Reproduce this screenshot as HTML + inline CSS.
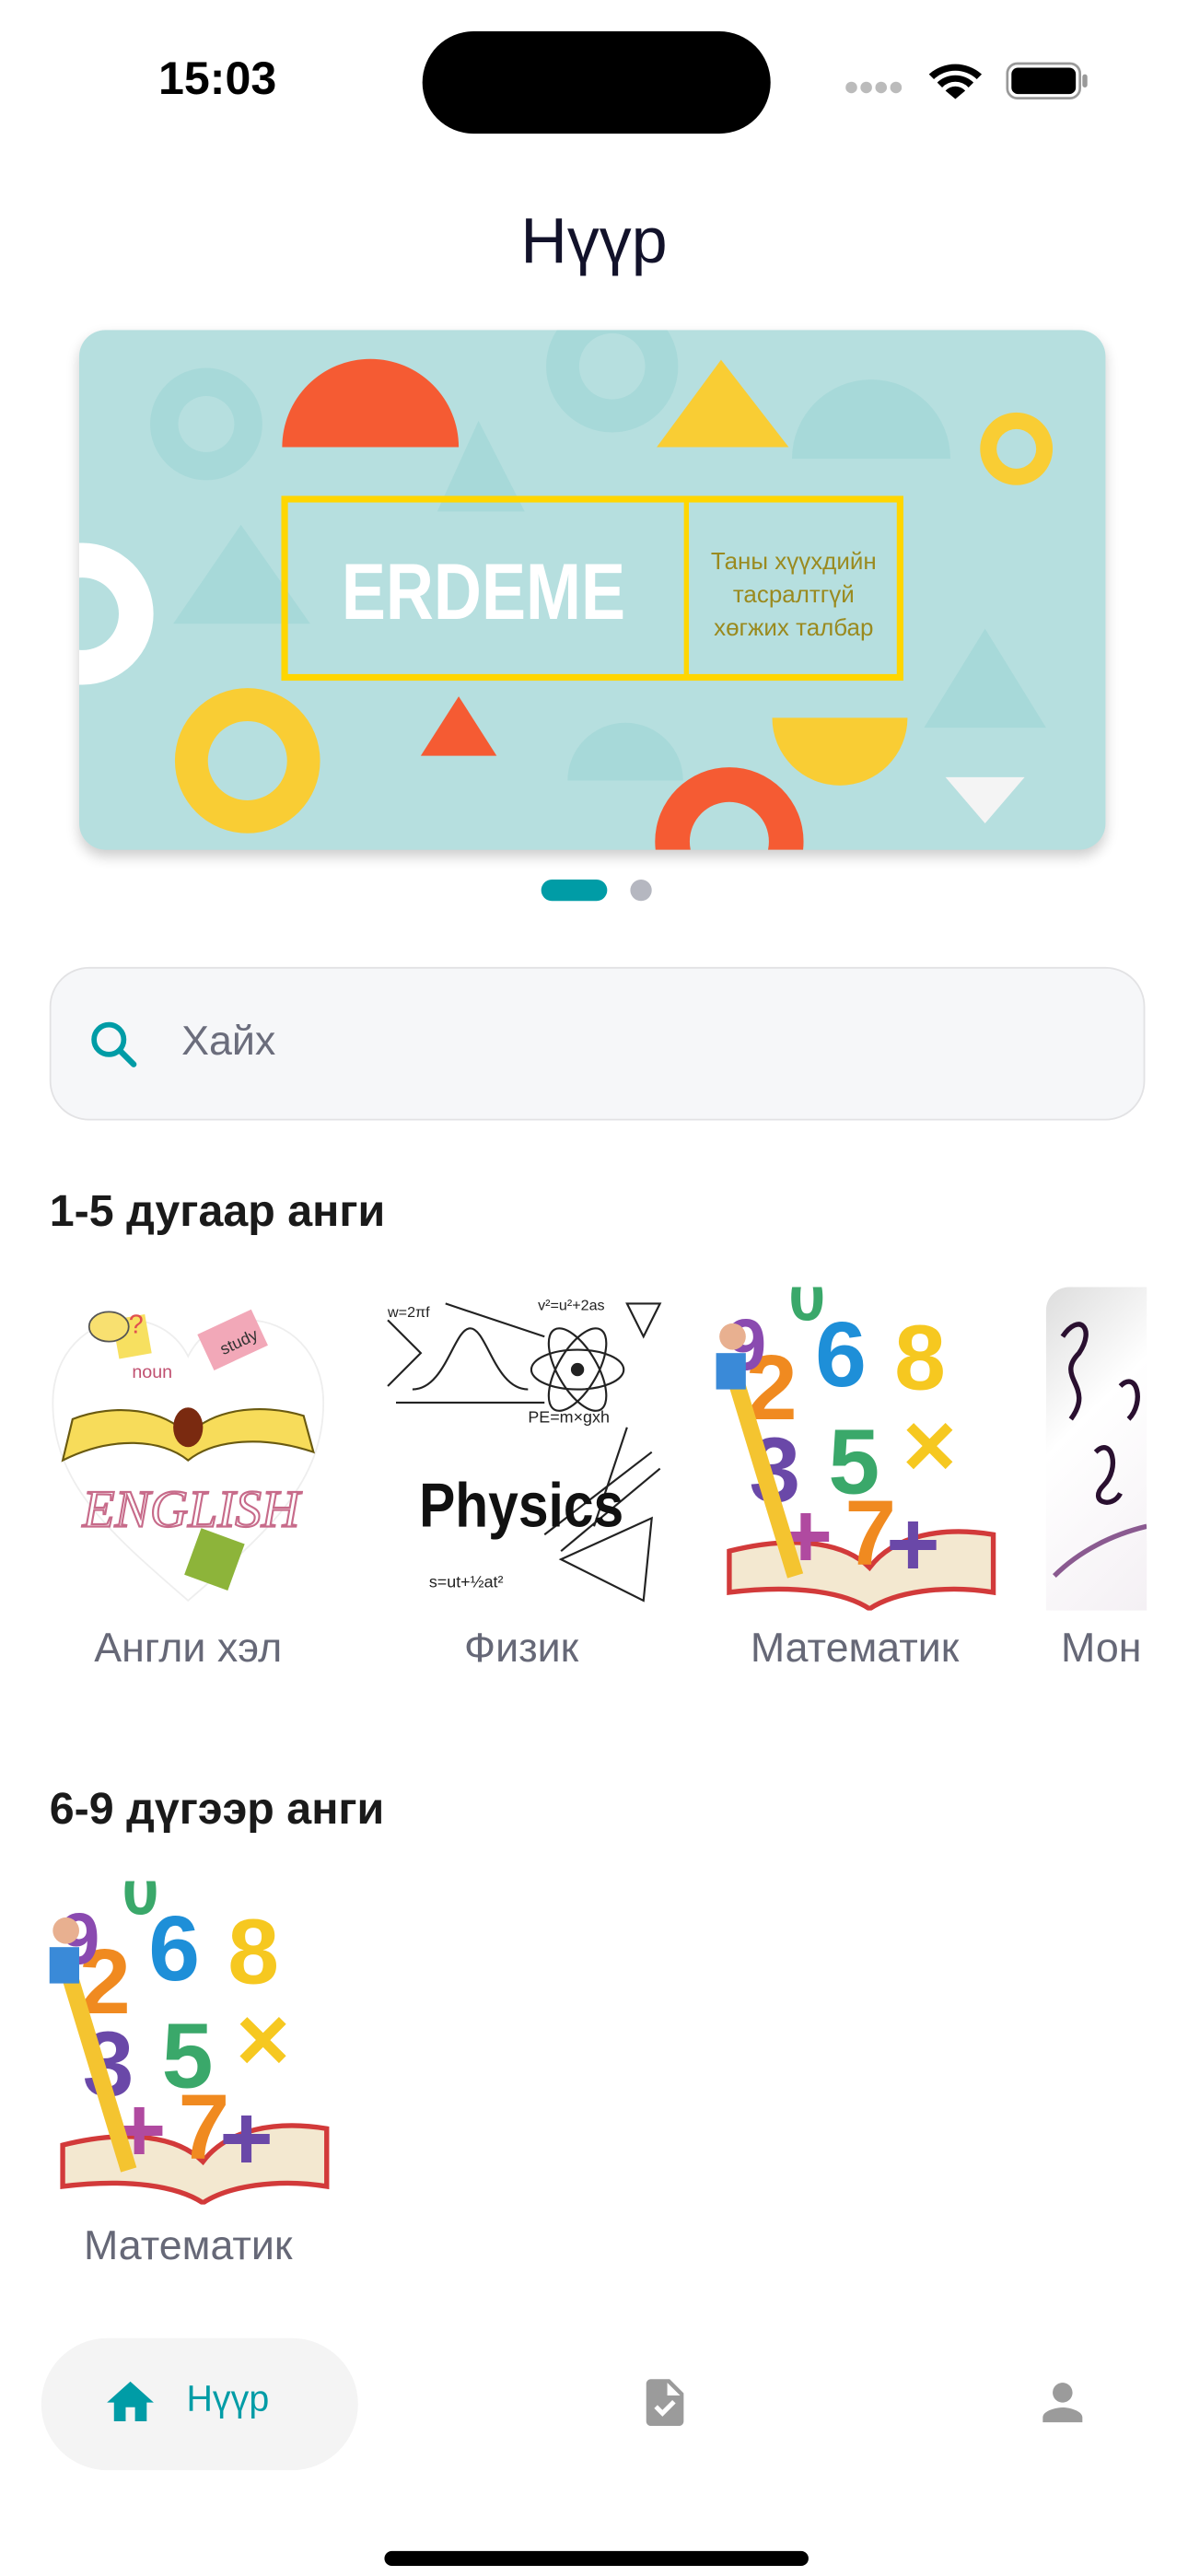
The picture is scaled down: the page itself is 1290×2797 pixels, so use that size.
<!DOCTYPE html>
<html><head><meta charset="utf-8"><style>
*{margin:0;padding:0;box-sizing:border-box}
html,body{width:1290px;height:2796px;overflow:hidden;background:#fff}
#p{position:absolute;left:0;top:0;width:720px;height:1561px;transform:scale(1.791667);transform-origin:0 0;font-family:"Liberation Sans","DejaVu Sans",sans-serif}
.a{position:absolute}
.lbl{position:absolute;font-size:25px;color:#666877;text-align:center;width:172px}
.h{position:absolute;left:30px;font-size:27px;font-weight:bold;color:#1a1a1a}
</style></head><body><div id="p">
<!-- status -->
<div class="a" style="left:96px;top:32px;font-size:28px;font-weight:bold;color:#000">15:03</div>
<div class="a" style="left:256px;top:19px;width:211px;height:62px;border-radius:31px;background:#000"></div>
<svg class="a" style="left:510px;top:32px" width="150" height="30" viewBox="0 0 150 30">
<g fill="#bbb"><circle cx="6" cy="21" r="3.5"/><circle cx="15" cy="21" r="3.5"/><circle cx="24" cy="21" r="3.5"/><circle cx="33" cy="21" r="3.5"/></g>
<path d="M53 13a24 24 0 0 1 32 0l-3 3a19 19 0 0 0-26 0z M58 18a16 16 0 0 1 22 0l-3 3a11 11 0 0 0-16 0z M63 23a8 8 0 0 1 12 0l-6 5z" fill="#000"/>
<rect x="100.5" y="6.5" width="44" height="21" rx="6" fill="none" stroke="#999" stroke-width="1.5"/>
<rect x="103" y="9" width="39" height="16" rx="4" fill="#000"/>
<rect x="146" y="13" width="3" height="8" rx="1.5" fill="#999"/>
</svg>
<div class="a" style="left:0;width:720px;top:125px;text-align:center;font-size:39px;color:#12122a">Нүүр</div>
<!-- banner -->
<div class="a" style="left:48px;top:200px;width:622px;height:315px;border-radius:16px;overflow:hidden;background:#b6dfdf;box-shadow:0 4px 8px rgba(0,0,0,.2)">
<svg width="622" height="315" viewBox="0 0 622 315">
<g fill="#a7d9d9">
<path d="M77 57m-34 0a34 34 0 1 0 68 0a34 34 0 1 0-68 0zM77 57m-17 0a17 17 0 1 1 34 0a17 17 0 1 1-34 0z" fill-rule="evenodd"/>
<path d="M323 22m-40 0a40 40 0 1 0 80 0a40 40 0 1 0-80 0zM323 22m-20 0a20 20 0 1 1 40 0a20 20 0 1 1-40 0z" fill-rule="evenodd"/>
<path d="M242 55L217 110H270Z"/>
<path d="M432 78a48 48 0 0 1 96 0z"/>
<path d="M98 118L57 178H140Z"/>
<path d="M549 181L512 241H586Z"/>
<path d="M296 273a35 35 0 0 1 70 0z"/>
</g>
<path d="M123 71a53 53 0 0 1 107 0z" fill="#f55b33"/>
<path d="M389 18L350 71H430Z" fill="#f9cd34"/>
<path d="M568 72m-22 0a22 22 0 1 0 44 0a22 22 0 1 0-44 0zM568 72m-12 0a12 12 0 1 1 24 0a12 12 0 1 1-24 0z" fill="#f9cd34" fill-rule="evenodd"/>
<path d="M2 172m-43 0a43 43 0 1 0 86 0a43 43 0 1 0-86 0zM2 172m-22 0a22 22 0 1 1 44 0a22 22 0 1 1-44 0z" fill="#fff" fill-rule="evenodd"/>
<path d="M102 261m-44 0a44 44 0 1 0 88 0a44 44 0 1 0-88 0zM102 261m-24 0a24 24 0 1 1 48 0a24 24 0 1 1-48 0z" fill="#f9cd34" fill-rule="evenodd"/>
<path d="M230 222L207 258H253Z" fill="#f55b33"/>
<path d="M394 310m-45 0a45 45 0 1 0 90 0a45 45 0 1 0-90 0zM394 310m-24 0a24 24 0 1 1 48 0a24 24 0 1 1-48 0z" fill="#f55b33" fill-rule="evenodd"/>
<path d="M420 235h82a41 41 0 0 1-82 0z" fill="#f9cd34"/>
<path d="M525 271H573L549 299Z" fill="#f4f4f4"/>
<rect x="124.5" y="102.5" width="373" height="108" fill="none" stroke="#ffd600" stroke-width="4"/>
<line x1="368" y1="102" x2="368" y2="211" stroke="#ffd600" stroke-width="3"/>
<text x="245" y="175" text-anchor="middle" font-family="Liberation Sans Narrow,Liberation Sans,sans-serif" font-weight="bold" font-size="48" fill="#fff" textLength="172" lengthAdjust="spacingAndGlyphs">ERDEME</text>
<g font-family="Liberation Sans,sans-serif" font-size="14.5" fill="#9a8a1f" text-anchor="middle">
<text x="433" y="145">Таны хүүхдийн</text><text x="433" y="165">тасралтгүй</text><text x="433" y="185">хөгжих талбар</text></g>
</svg></div>
<div class="a" style="left:328px;top:533px;width:40px;height:13px;border-radius:7px;background:#009ca6"></div>
<div class="a" style="left:382px;top:533px;width:13px;height:13px;border-radius:50%;background:#b5b7c0"></div>
<!-- search -->
<div class="a" style="left:30px;top:586px;width:664px;height:93px;border-radius:24px;background:#f6f7f9;border:1.5px solid #e2e2e4"></div>
<svg class="a" style="left:53px;top:617px" width="32" height="32" viewBox="0 0 32 32"><circle cx="13" cy="13" r="9" fill="none" stroke="#009ca6" stroke-width="3.2"/><path d="M19.5 19.5L28 28" stroke="#009ca6" stroke-width="3.6" stroke-linecap="round"/></svg>
<div class="a" style="left:110px;top:617px;font-size:25px;color:#6b6d7c">Хайх</div>
<div class="h" style="top:719px">1-5 дугаар анги</div>
<!-- english -->
<svg class="a" style="left:28px;top:780px" width="172" height="196" viewBox="0 0 172 196">
<path d="M86 190C40 150 4 120 4 70C4 40 25 20 50 20C68 20 80 30 86 42C92 30 104 20 122 20C147 20 168 40 168 70C168 120 132 150 86 190Z" fill="#fff" stroke="#eee"/>
<path d="M10 105C40 90 70 92 86 105C102 92 132 90 162 100L156 78C130 70 100 74 86 90C72 74 42 70 16 80Z" fill="#f7dc5a" stroke="#6a5a10" stroke-width="1.2"/>
<ellipse cx="86" cy="85" rx="9" ry="12" fill="#7a2a10"/>
<text x="22" y="145" font-size="32" fill="#fff" stroke="#c76b8a" stroke-width="1.2" font-family="Liberation Serif,serif" font-style="italic">ENGLISH</text>
<rect x="42" y="18" width="20" height="24" fill="#f7e060" transform="rotate(-10 52 30)"/>
<ellipse cx="38" cy="24" rx="12" ry="9" fill="#f8e070" stroke="#555"/>
<rect x="95" y="20" width="36" height="24" fill="#f2a8b8" transform="rotate(-25 113 32)"/>
<text x="104" y="38" font-size="10" fill="#333" transform="rotate(-25 113 32)">study</text>
<rect x="88" y="150" width="28" height="30" fill="#8db43a" transform="rotate(20 102 165)"/>
<text x="52" y="55" font-size="11" fill="#c05070">noun</text>
<text x="50" y="28" font-size="16" fill="#e05050">?</text>
</svg>
<!-- physics -->
<svg class="a" style="left:230px;top:780px" width="172" height="196" viewBox="0 0 172 196">
<rect width="172" height="196" fill="#fff"/>
<g stroke="#222" fill="none" stroke-width="1.2">
<ellipse cx="120" cy="50" rx="28" ry="12"/><ellipse cx="120" cy="50" rx="28" ry="12" transform="rotate(60 120 50)"/><ellipse cx="120" cy="50" rx="28" ry="12" transform="rotate(-60 120 50)"/>
<path d="M20 62C40 62 45 25 55 25C65 25 70 62 90 62"/><path d="M10 70H100"/>
<path d="M40 10L100 30"/><path d="M150 10L160 30L170 10Z"/>
<path d="M110 165L165 140L160 190Z"/><path d="M100 150L165 100"/><path d="M110 160L170 110"/>
<path d="M5 20L25 40L5 60"/><path d="M130 145L150 85"/>
</g>
<circle cx="120" cy="50" r="4" fill="#222"/>
<text x="96" y="14" font-size="9" fill="#222">v²=u²+2as</text>
<text x="5" y="18" font-size="9" fill="#222">w=2πf</text>
<text x="90" y="82" font-size="10" fill="#222">PE=m×gxh</text>
<text x="30" y="182" font-size="10" fill="#222">s=ut+½at²</text>
<text x="24" y="145" font-size="38" font-weight="bold" fill="#111" font-family="Liberation Sans Narrow,Liberation Sans,sans-serif" textLength="124" lengthAdjust="spacingAndGlyphs">Physics</text>
</svg>
<!-- math -->
<svg class="a" style="left:432px;top:780px" width="172" height="196" viewBox="0 0 172 196">
<rect width="172" height="196" fill="#fff"/>
<path d="M10 160C50 150 80 155 95 170C110 150 140 145 170 150V185C140 180 110 185 95 195C80 185 50 180 10 185Z" fill="#f3e8d0" stroke="#d23a3a" stroke-width="3"/>
<g font-family="Liberation Sans,sans-serif" font-weight="bold" font-size="56">
<text x="20" y="80" fill="#f08a20">2</text><text x="62" y="60" fill="#1e8fd8">6</text><text x="110" y="62" fill="#f6c820">8</text>
<text x="46" y="20" fill="#3aa86a" font-size="40">0</text><text x="8" y="50" fill="#8a4ab0" font-size="44">9</text>
<text x="22" y="130" fill="#6a48a8">3</text><text x="70" y="125" fill="#3aa86a">5</text><text x="115" y="115" fill="#f6c820">×</text>
<text x="80" y="168" fill="#f08a20">7</text><text x="40" y="170" fill="#b04aa0">+</text><text x="105" y="175" fill="#6a48a8">+</text>
</g>
<path d="M15 60L50 175" stroke="#f4c430" stroke-width="10"/>
<circle cx="12" cy="30" r="8" fill="#e8b090"/><rect x="2" y="40" width="18" height="22" fill="#3a8ad8"/>
</svg>
<!-- mongol -->
<div class="a" style="left:634px;top:780px;width:61px;height:196px;overflow:hidden;border-radius:14px 0 0 0;background:linear-gradient(135deg,#ddd,#fff 40%,#f4f0f4)">
<svg width="61" height="196" viewBox="0 0 61 196"><g fill="none" stroke="#2a1030" stroke-width="3"><path d="M10 30C20 15 30 25 20 40C5 55 30 60 15 80"/><path d="M30 100C40 90 45 110 35 120C25 130 40 135 45 125"/><path d="M45 60C55 50 60 70 50 80"/></g><path d="M5 175C20 160 40 150 61 145" stroke="#8a5a90" stroke-width="3" fill="none"/></svg></div>
<div class="lbl" style="left:28px;top:985px">Англи хэл</div>
<div class="lbl" style="left:230px;top:985px">Физик</div>
<div class="lbl" style="left:432px;top:985px">Математик</div>
<div class="a" style="left:643px;top:985px;width:52px;overflow:hidden;white-space:nowrap;font-size:25px;color:#666877">Мон&nbsp;</div>
<div class="h" style="top:1081px">6-9 дүгээр анги</div>
<svg class="a" style="left:28px;top:1140px" width="172" height="196" viewBox="0 0 172 196">
<rect width="172" height="196" fill="#fff"/>
<path d="M10 160C50 150 80 155 95 170C110 150 140 145 170 150V185C140 180 110 185 95 195C80 185 50 180 10 185Z" fill="#f3e8d0" stroke="#d23a3a" stroke-width="3"/>
<g font-family="Liberation Sans,sans-serif" font-weight="bold" font-size="56">
<text x="20" y="80" fill="#f08a20">2</text><text x="62" y="60" fill="#1e8fd8">6</text><text x="110" y="62" fill="#f6c820">8</text>
<text x="46" y="20" fill="#3aa86a" font-size="40">0</text><text x="8" y="50" fill="#8a4ab0" font-size="44">9</text>
<text x="22" y="130" fill="#6a48a8">3</text><text x="70" y="125" fill="#3aa86a">5</text><text x="115" y="115" fill="#f6c820">×</text>
<text x="80" y="168" fill="#f08a20">7</text><text x="40" y="170" fill="#b04aa0">+</text><text x="105" y="175" fill="#6a48a8">+</text>
</g>
<path d="M15 60L50 175" stroke="#f4c430" stroke-width="10"/>
<circle cx="12" cy="30" r="8" fill="#e8b090"/><rect x="2" y="40" width="18" height="22" fill="#3a8ad8"/>
</svg>
<div class="lbl" style="left:28px;top:1347px">Математик</div>
<!-- nav -->
<div class="a" style="left:25px;top:1417px;width:192px;height:80px;border-radius:40px;background:#f4f4f4"></div>
<svg class="a" style="left:62px;top:1439px" width="34" height="34" viewBox="0 0 24 24"><path d="M10 20v-6h4v6h5v-8h3L12 3 2 12h3v8z" fill="#009ca6"/></svg>
<div class="a" style="left:113px;top:1441px;font-size:22px;color:#009ca6">Нүүр</div>
<svg class="a" style="left:386px;top:1436px" width="34" height="40" viewBox="0 0 24 24"><path d="M14 2H6c-1.1 0-2 .9-2 2v16c0 1.1.9 2 2 2h12c1.1 0 2-.9 2-2V8l-6-6zm-3.06 16L7.4 14.46l1.41-1.41 2.12 2.12 4.24-4.24 1.41 1.41L10.94 18zM13 9V3.5L18.5 9H13z" fill="#9b9b9b"/></svg>
<svg class="a" style="left:626px;top:1438px" width="36" height="36" viewBox="0 0 24 24"><path d="M12 12c2.21 0 4-1.790 4-4s-1.79-4-4-4-4 1.79-4 4 1.79 4 4 4zm0 2c-2.67 0-8 1.34-8 4v2h16v-2c0-2.66-5.33-4-8-4z" fill="#9b9b9b"/></svg>
<div class="a" style="left:233px;top:1546px;width:257px;height:9px;border-radius:5px;background:#000"></div>
</div></body></html>
